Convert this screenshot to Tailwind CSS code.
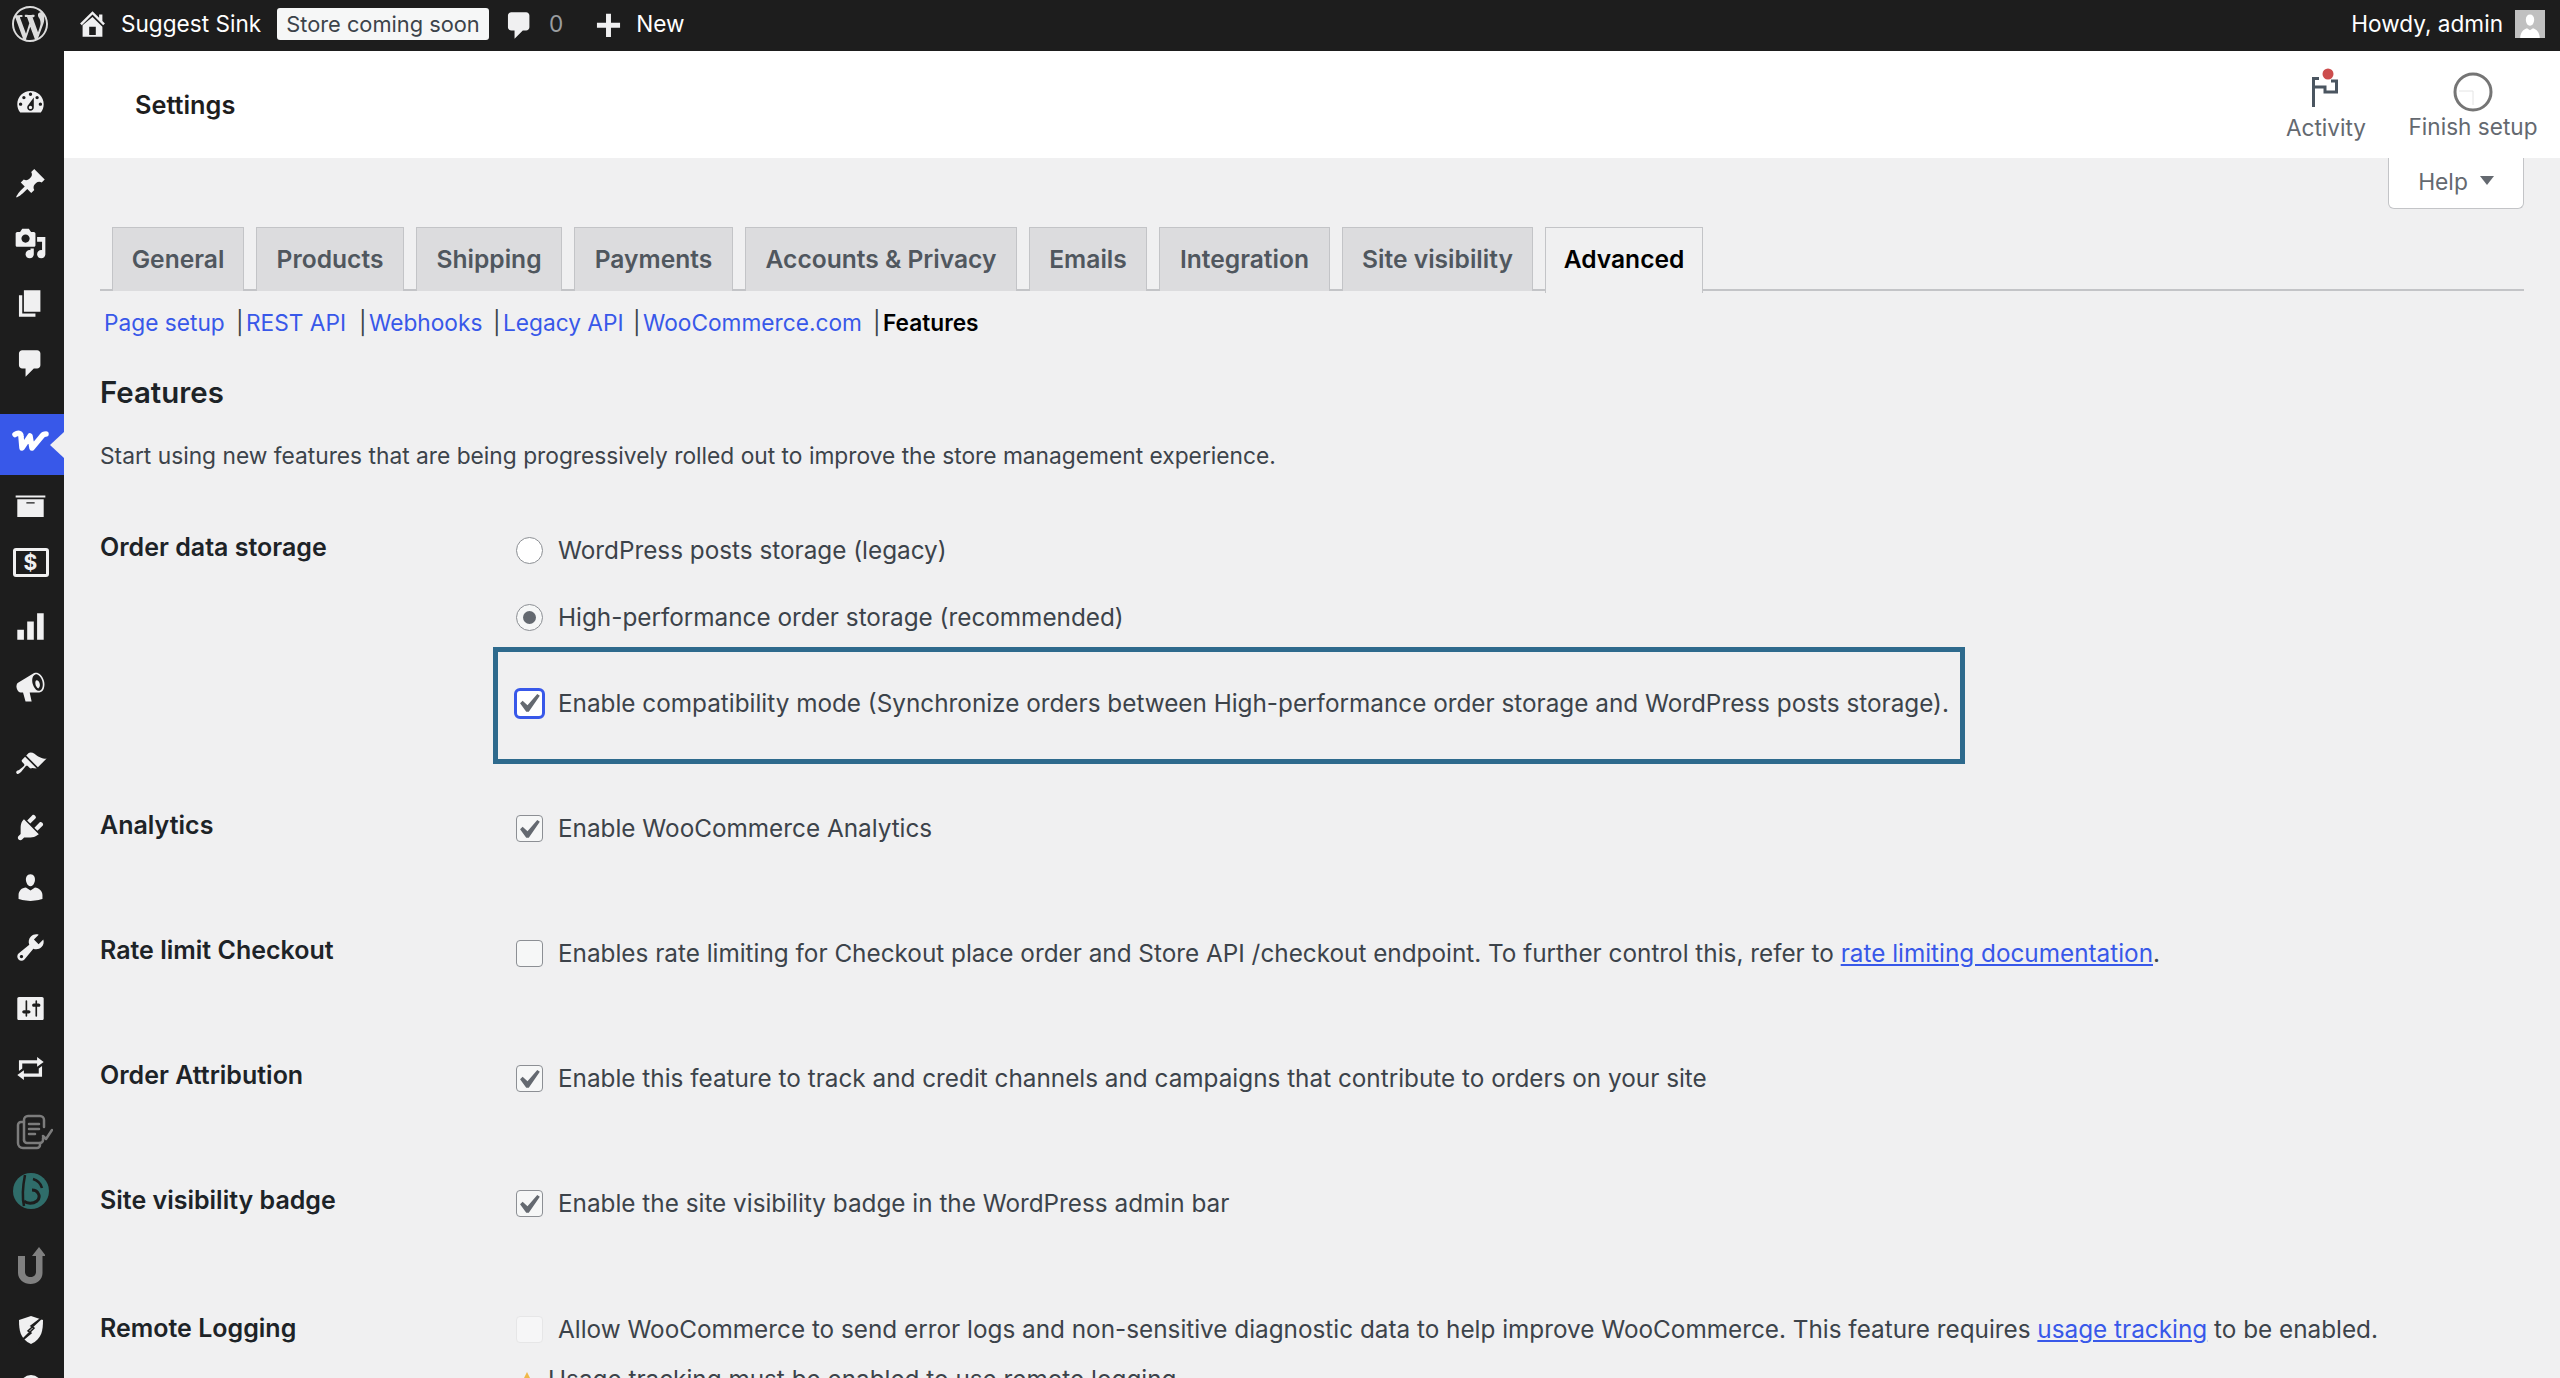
<!DOCTYPE html>
<html lang="en">
<head>
<meta charset="utf-8">
<title>Settings</title>
<script src="https://cdn.jsdelivr.net/npm/@tailwindcss/browser@4"></script>
</head>
<body class="m-0 bg-[#f0f0f1]">
<div class="w-[2560px] h-[1378px] overflow-hidden flex flex-col font-['Inter',sans-serif] text-[#3c434a]">
  <!-- admin bar -->
  <header class="h-[51px] shrink-0 bg-[#1d1d1d] flex items-center text-white text-[22.6px] pb-[3px]">
    <svg class="ml-[12px] w-[36px] h-[36px]" viewBox="0 0 20 20" fill="#dcdcdc"><path d="M20 10c0-5.51-4.49-10-10-10C4.48 0 0 4.49 0 10c0 5.52 4.48 10 10 10 5.51 0 10-4.48 10-10zM7.78 15.37L4.37 6.22c.55-.02 1.17-.08 1.17-.08.5-.06.44-1.13-.06-1.11 0 0-1.45.11-2.37.11-.18 0-.37 0-.58-.01C4.12 2.69 6.87 1.11 10 1.11c2.33 0 4.45.87 6.05 2.34-.68-.11-1.65.39-1.65 1.58 0 .74.45 1.36.9 2.1.35.61.55 1.36.55 2.46 0 1.49-1.4 5-1.4 5l-3.03-8.37c.54-.02.82-.17.82-.17.5-.05.44-1.25-.06-1.22 0 0-1.44.12-2.38.12-.87 0-2.33-.12-2.33-.12-.5-.03-.56 1.2-.06 1.22l.92.08 1.26 3.41zM17.41 10c.24-.64.74-1.87.43-4.25.7 1.29 1.05 2.71 1.05 4.25 0 3.29-1.73 6.24-4.4 7.78.97-2.59 1.94-5.2 2.92-7.78zM6.1 18.09C3.12 16.65 1.11 13.53 1.11 10c0-1.3.23-2.48.72-3.59C3.25 10.3 4.67 14.2 6.1 18.09zm4.03-6.63l2.58 6.98c-.86.29-1.76.45-2.71.45-.79 0-1.57-.11-2.29-.33.81-2.38 1.62-4.74 2.42-7.1z"/></svg>
    <svg class="ml-[28px] w-[33px] h-[33px] -mt-[2px]" viewBox="0 0 20 20" fill="#f0f0f1"><path d="M16 8.5l1.53 1.53-1.06 1.06L10 4.62l-6.47 6.47-1.06-1.06L10 2.5l4 4v-2h2v4zm-6-2.46l6 5.99V18H4v-6.97zM12 17v-5H8v5h4z"/></svg>
    <span class="ml-[12px] w-[145px] whitespace-nowrap">Suggest Sink</span>
    <span class="ml-[11px] w-[212px] h-[32px] bg-[#f6f7f7] rounded-[3px] text-[#3c434a] text-[21.8px] flex items-center justify-center whitespace-nowrap">Store coming soon</span>
    <svg class="ml-[14px] w-[33px] h-[33px] mt-[2px]" viewBox="0 0 20 20" fill="#f0f0f1"><path d="M5 2h9c1.1 0 2 .9 2 2v7c0 1.1-.9 2-2 2h-2l-5 5v-5H5c-1.1 0-2-.9-2-2V4c0-1.1.9-2 2-2z"/></svg>
    <span class="ml-[13px] text-[#9a9da0]">0</span>
    <svg class="ml-[29px] w-[33px] h-[33px]" viewBox="0 0 20 20" fill="#f0f0f1"><path d="M17 9v3h-5.5v5.5h-3V12H3V9h5.5V3.5h3V9H17z"/></svg>
    <span class="ml-[11px]">New</span>
    <span class="ml-auto whitespace-nowrap">Howdy, admin</span>
    <span class="ml-[12px] mr-[15px] w-[30px] h-[28px] bg-[#c0c0c0] overflow-hidden flex items-end justify-center">
      <svg class="w-[26px] h-[26px]" viewBox="0 0 20 20" fill="#fff"><path d="M10 10.5c-2.4 0-3.2-3-3.2-4.8C6.8 3.6 8 2 10 2s3.2 1.6 3.2 3.7c0 1.8-.8 4.8-3.2 4.8zM2.5 20c0-4 2.500-6.800 5.200-7.500L10 14l2.300-1.500c2.700.7 5.200 3.500 5.200 7.500z"/></svg>
    </span>
  </header>

  <div class="flex flex-1 min-h-0">
    <!-- sidebar -->
    <nav class="w-[64px] shrink-0 bg-[#1d1d1d] pt-[21px] pr-[3px] overflow-hidden">
      <div class="h-[60px] flex items-center justify-center"><svg class="w-[33px] h-[33px]" viewBox="0 0 20 20" fill="#f0f0f1"><path d="M3.760 16h12.480c1.100-1.370 1.760-3.110 1.760-5 0-4.420-3.580-8-8-8s-8 3.580-8 8c0 1.890.66 3.630 1.760 5zM10 4c.55 0 1 .45 1 1s-.45 1-1 1-1-.45-1-1 .45-1 1-1zM6 6c.55 0 1 .45 1 1s-.45 1-1 1-1-.45-1-1 .45-1 1-1zm8 0c.55 0 1 .45 1 1s-.45 1-1 1-1-.45-1-1 .45-1 1-1zm-5.370 5.550L12 7v6c0 1.100-.9 2-2 2s-2-.9-2-2c0-.57.24-1.080.63-1.450zM4 10c.55 0 1 .45 1 1s-.45 1-1 1-1-.45-1-1 .45-1 1-1zm12 0c.55 0 1 .45 1 1s-.45 1-1 1-1-.45-1-1 .45-1 1-1zm-5 3c0-.55-.45-1-1-1s-1 .45-1 1 .45 1 1 1 1-.45 1-1z"/></svg></div>
      <div class="mt-[21px] h-[60px] flex items-center justify-center"><svg class="w-[33px] h-[33px]" viewBox="0 0 20 20" fill="#f0f0f1"><path d="M10.440 3.020l1.820-1.820 6.360 6.350-1.830 1.820c-1.050-.68-2.480-.57-3.410.36l-.75.75c-.92.93-1.040 2.350-.35 3.410l-1.830 1.820-2.410-2.410-2.800 2.790c-.42.42-3.380 2.710-3.800 2.290s1.860-3.390 2.280-3.810l2.790-2.790L4.100 9.360l1.830-1.820c1.050.69 2.480.57 3.400-.36l.75-.75c.93-.92 1.050-2.350.36-3.410z"/></svg></div>
      <div class="h-[60px] flex items-center justify-center"><svg class="w-[33px] h-[33px]" viewBox="0 0 20 20" fill="#f0f0f1"><path d="M13 11V4c0-.55-.45-1-1-1h-1.670L9 1H5L3.670 3H2c-.55 0-1 .45-1 1v7c0 .55.45 1 1 1h10c.55 0 1-.45 1-1zM7 4.500c1.380 0 2.500 1.120 2.500 2.500S8.380 9.500 7 9.500 4.500 8.380 4.500 7 5.620 4.500 7 4.500zM14 6h5v10.500c0 1.380-1.120 2.500-2.500 2.500S14 17.880 14 16.500s1.120-2.500 2.500-2.500c.17 0 .34.02.5.05V9h-3V6zm-4 8.050V13h2v3.500c0 1.380-1.120 2.500-2.500 2.500S7 17.880 7 16.500 8.120 14 9.500 14c.17 0 .34.02.5.05z"/></svg></div>
      <div class="h-[60px] flex items-center justify-center"><svg class="w-[33px] h-[33px]" viewBox="0 0 20 20" fill="#f0f0f1"><path d="M6 15V2h10v13H6zm-1 1h8v2H3V5h2v11z"/></svg></div>
      <div class="h-[60px] flex items-center justify-center"><svg class="w-[33px] h-[33px]" viewBox="0 0 20 20" fill="#f0f0f1"><path d="M5 2h9c1.100 0 2 .9 2 2v7c0 1.100-.9 2-2 2h-2l-5 5v-5H5c-1.100 0-2-.9-2-2V4c0-1.100.9-2 2-2z"/></svg></div>
      <!-- active -->
      <div class="mt-[21px] -mr-[3px] h-[61px] bg-[#3858e9] relative flex items-center justify-center">
        <svg class="w-[37px] h-[22px] -ml-[3px] -mt-[7px]" viewBox="0 0 37 22" fill="none" stroke="#fff" stroke-width="5.500" stroke-linejoin="round" stroke-linecap="round"><path d="M3 4.500C6 2.500 9 3 9 6.500L10 18l8-12 2 12L30 6c1-1.500 2.500-2 4-2"/></svg>
        <span class="absolute right-0 top-1/2 -translate-y-1/2 w-0 h-0 border-y-[13px] border-y-transparent border-r-[14px] border-r-[#f0f0f1]"></span>
      </div>
      <div class="h-[60px] flex items-center justify-center"><svg class="w-[33px] h-[33px]" viewBox="0 0 20 20" fill="#f0f0f1"><path d="M19 4v1.200H1V4h18zM2 6.200h16V17H2V6.200zm10.500 2.600V8h-5v.8h5z"/></svg></div>
      <div class="h-[54px] flex items-center justify-center">
        <span class="w-[36px] h-[29px] rounded-[3px] border-[3px] border-[#f0f0f1] flex items-center justify-center text-[#f0f0f1] text-[21px] font-bold leading-none">$</span>
      </div>
      <div class="h-[74px] flex items-center justify-center"><svg class="w-[33px] h-[33px]" viewBox="0 0 20 20" fill="#f0f0f1"><path d="M18 18V2h-4v16h4zm-6 0V7H8v11h4zm-6 0v-6H2v6h4z"/></svg></div>
      <div class="h-[48px] flex items-center justify-center"><svg class="w-[33px] h-[33px]" viewBox="0 0 20 20" fill="#f0f0f1"><path d="M18.150 5.940c.46 1.620.38 3.220-.02 4.480-.42 1.280-1.260 2.180-2.300 2.480-.16.06-.26.06-.4.06-.06.02-.12.02-.18.02-.06.02-.14.02-.22.02H9.500l1.200 5.500H7l-1.530-5.500H4.250l-.02-.02c-.5.06-1.080-.18-1.540-.62s-.88-1.080-1.060-1.880c-.24-.8-.2-1.560-.02-2.200.18-.62.58-1.080 1.060-1.300l.02-.02 9-5.400c.1-.06.18-.1.24-.16.06-.04.14-.08.24-.12.16-.08.28-.12.5-.18 1.040-.3 2.240.1 3.220.98s1.840 2.240 2.260 3.860zm-2.580 5.980h-.02c.4-.1.74-.34 1.040-.7.58-.7.86-1.760.86-3.040 0-.64-.1-1.300-.26-1.980-.34-1.360-1.020-2.500-1.780-3.240s-1.680-1.100-2.460-.88c-.82.22-1.400.96-1.700 2-.32 1.040-.28 2.360.06 3.720.38 1.360 1 2.500 1.800 3.240.78.74 1.620 1.100 2.460.88zm-.38-1.440c-.3.1-.62.02-.96-.22s-.62-.6-.86-1.120c-.12-.26-.22-.54-.3-.86-.16-.62-.18-1.240-.1-1.720.12-.5.36-.82.7-.92.34-.08.72.06 1.080.4.36.36.64.88.8 1.520.18.64.18 1.260.06 1.740-.12.5-.38.86-.72.96z"/></svg></div>
      <div class="mt-[24px] h-[60px] flex items-center justify-center"><svg class="w-[33px] h-[33px]" viewBox="0 0 20 20" fill="#f0f0f1"><path d="M14.480 11.060L7.410 3.990l1.500-1.500c.5-.56 2.300-.47 3.510.32 1.210.8 1.430 1.280 2.910 2.100 1.180.64 2.450 1.260 4.450.85zm-.71.71L6.700 4.700 4.930 6.470c-.39.39-.39 1.020 0 1.410l1.060 1.060c.39.39.39 1.030 0 1.420-.6.6-1.430 1.110-2.210 1.690-.35.26-.7.53-1.010.84C1.430 13.230.91 14.100 1.620 14.810s1.580.19 2.920-1.150c.31-.31.58-.66.84-1.010.58-.78 1.090-1.610 1.690-2.210.39-.39 1.030-.39 1.420 0l1.060 1.060c.39.39 1.020.39 1.410 0z"/></svg></div>
      <div class="h-[64px] flex items-center justify-center"><svg class="w-[33px] h-[33px]" viewBox="0 0 20 20" fill="#f0f0f1"><path d="M13.110 4.360L9.870 7.600 8 5.730l3.240-3.240c.35-.34 1.050-.2 1.560.32.52.51.66 1.210.31 1.550zm-8 1.770l.91-1.120 9.010 9.010-1.190.84c-.71.71-2.630 1.160-3.820 1.160H6.140L4.900 17.260c-.59.59-1.540.59-2.120 0-.59-.58-.59-1.530 0-2.120l1.240-1.240v-3.880c0-1.130.4-3.190 1.090-3.890zm7.260 3.970l3.240-3.240c.34-.35 1.040-.21 1.550.31.52.51.66 1.210.31 1.550l-3.240 3.250z"/></svg></div>
      <div class="h-[56px] flex items-center justify-center"><svg class="w-[33px] h-[33px]" viewBox="0 0 20 20" fill="#f0f0f1"><path d="M10 9.250c-2.270 0-2.730-3.440-2.730-3.440C7 4.020 7.820 2 9.970 2c2.160 0 2.980 2.020 2.710 3.810 0 0-.41 3.440-2.680 3.440zm0 2.570L12.720 10c2.390 0 4.520 2.330 4.520 4.530v2.490s-3.650 1.130-7.240 1.130c-3.650 0-7.240-1.130-7.240-1.130v-2.490c0-2.250 1.940-4.480 4.470-4.480z"/></svg></div>
      <div class="h-[64px] flex items-center justify-center"><svg class="w-[33px] h-[33px]" viewBox="0 0 20 20" fill="#f0f0f1"><path d="M16.680 9.770c-1.340 1.340-3.300 1.670-4.950.99l-5.410 6.520c-.99.99-2.590.99-3.580 0s-.99-2.590 0-3.570l6.520-5.420c-.68-1.650-.35-3.610.99-4.950 1.280-1.280 3.120-1.620 4.720-1.060l-2.890 2.890 2.820 2.820 2.860-2.870c.53 1.580.18 3.390-1.080 4.650zM3.810 16.210c.4.39 1.040.39 1.430 0 .4-.4.4-1.040 0-1.430-.39-.4-1.030-.4-1.430 0-.39.39-.39 1.030 0 1.430z"/></svg></div>
      <div class="h-[58px] flex items-center justify-center"><svg class="w-[33px] h-[33px]" viewBox="0 0 20 20" fill="#f0f0f1"><path d="M18 16V4c0-.55-.45-1-1-1H3c-.55 0-1 .45-1 1v12c0 .55.45 1 1 1h14c.55 0 1-.45 1-1zM8 11h1c.55 0 1 .45 1 1s-.45 1-1 1H8v1.500c0 .28-.22.5-.5.5s-.5-.22-.5-.5V13H6c-.55 0-1-.45-1-1s.45-1 1-1h1V5.500c0-.28.22-.5.5-.5s.5.22.5.5V11zm5-2h-1c-.55 0-1-.45-1-1s.45-1 1-1h1V5.500c0-.28.22-.5.5-.5s.5.22.5.5V7h1c.55 0 1 .45 1 1s-.45 1-1 1h-1v5.500c0 .28-.22.5-.5.5s-.5-.22-.5-.5V9z"/></svg></div>
      <div class="h-[62px] flex items-center justify-center"><svg class="w-[33px] h-[33px]" viewBox="0 0 20 20" fill="#f0f0f1"><path d="M5 7v3l-2 1.500V5h11V3l4 3.010L14 9V7H5zm10 6v-3l2-1.500V15H6v2l-4-3.010L6 11v2h9z"/></svg></div>
      <div class="h-[66px] flex items-center justify-center"><svg class="w-[38px] h-[36px] ml-[7px]" viewBox="0 0 38 36" fill="none" stroke="#7c7c7c" stroke-width="2.500" stroke-linejoin="round" stroke-linecap="round"><path d="M9 8h-3a3 3 0 0 0-3 3v18a5 5 0 0 0 5 5h14a3 3 0 0 0 3-3v-2"/><path d="M9 26V6a4 4 0 0 1 4-4h12a4 4 0 0 1 4 4v7"/><path d="M9 26a3 3 0 0 0 3 3h13a3 3 0 0 0 3-3v-2"/><path d="M14 10h10M14 15h10M14 20h6"/><path d="M28 22l3 3 6-9"/></svg></div>
      <div class="h-[52px] flex items-center justify-center"><svg class="w-[36px] h-[36px]" viewBox="0 0 36 36"><circle cx="18" cy="18" r="18" fill="#2f6d6a"/><path d="M12 2C10 12 9 24 11 33" fill="none" stroke="#1d1d1d" stroke-width="2.500"/><path d="M11 28c3 3 9 3 13 0 2-2 3-5 1-8-1-2-3-3-6-3" fill="none" stroke="#1d1d1d" stroke-width="3"/><path d="M20 6a13 13 0 0 1 9 9" fill="none" stroke="#1d1d1d" stroke-width="2.500"/></svg></div>
      <div class="h-[96px] flex items-center justify-center"><svg class="w-[28px] h-[38px]" viewBox="0 0 28 38" fill="#808080"><path d="M1 10h7v16c0 3 2.500 5 5.500 5s5.500-2 5.500-5V10h-4l7-9 7 9h-3.500v17c0 6.500-5.500 11-12 11S1 33.500 1 27z"/></svg></div>
      <div class="h-[34px] flex items-center justify-center"><svg class="w-[30px] h-[30px]" viewBox="0 0 30 30"><path d="M15 1l12 4c0 10-1 19-12 24C4 24 3 15 3 5z" fill="#f0f0f1"/><path d="M28 1L15 11l3 2L2 29l13-11-3-2z" fill="#f0f0f1" stroke="#1d1d1d" stroke-width="1.500"/></svg></div>
      <div class="mt-[28px] h-[30px] flex justify-center"><span class="w-[22px] h-[22px] rounded-full bg-[#f0f0f1]"></span></div>
    </nav>

    <!-- main -->
    <main class="flex-1 min-w-0 flex flex-col">
      <div class="h-[107px] shrink-0 bg-white flex items-center">
        <h1 class="ml-[71px] text-[25.3px] font-semibold text-[#1e1e1e] mt-[1px]">Settings</h1>
        <div class="ml-auto flex h-full text-[22.6px] text-[#646970]">
          <div class="w-[120px] flex flex-col items-center pt-[15px] mr-[22px]">
            <svg class="w-[34px] h-[45px] shrink-0" viewBox="0 0 34 45" fill="none"><path d="M4.500 41V12.500H10M4.500 21H16v5h11.500V15H22" stroke="#4a5560" stroke-width="3"/><circle cx="19" cy="8" r="5.500" fill="#cc4d4d"/></svg>
            <span>Activity</span>
          </div>
          <div class="w-[130px] mr-[22px] flex flex-col items-center pt-[21px] whitespace-nowrap">
            <svg class="w-[40px] h-[40px] shrink-0" viewBox="0 0 40 40" fill="none"><circle cx="20" cy="20" r="18" stroke="#757575" stroke-width="3"/><path d="M6 19h14v14" stroke="#e4e4e4" stroke-width="1"/></svg>
            <span class="-mt-[2px]">Finish setup</span>
          </div>
        </div>
      </div>

      <div class="px-[36px] flex-1 min-h-0">
        <div class="h-[69px] flex justify-end">
          <div class="w-[136px] h-[51px] pb-[2px] bg-white border border-t-0 border-[#c3c4c7] rounded-b-[6px] flex items-center justify-center gap-[12px] text-[22.8px] text-[#646970]">
            <span>Help</span>
            <span class="w-0 h-0 border-x-[7px] border-x-transparent border-t-[9px] border-t-[#646970] -mt-[3px]"></span>
          </div>
        </div>

        <div class="h-[64px] border-b-2 border-[#c3c4c7] pl-[12px] flex gap-[12px] text-[24.6px] font-semibold text-[#50575e]">
          <a class="w-[132px] h-[64px] bg-[#dcdcde] border border-b-0 border-[#c3c4c7] flex items-center justify-center">General</a>
          <a class="w-[148px] h-[64px] bg-[#dcdcde] border border-b-0 border-[#c3c4c7] flex items-center justify-center">Products</a>
          <a class="w-[146px] h-[64px] bg-[#dcdcde] border border-b-0 border-[#c3c4c7] flex items-center justify-center">Shipping</a>
          <a class="w-[159px] h-[64px] bg-[#dcdcde] border border-b-0 border-[#c3c4c7] flex items-center justify-center">Payments</a>
          <a class="w-[272px] h-[64px] bg-[#dcdcde] border border-b-0 border-[#c3c4c7] flex items-center justify-center whitespace-nowrap">Accounts &amp; Privacy</a>
          <a class="w-[118px] h-[64px] bg-[#dcdcde] border border-b-0 border-[#c3c4c7] flex items-center justify-center">Emails</a>
          <a class="w-[171px] h-[64px] bg-[#dcdcde] border border-b-0 border-[#c3c4c7] flex items-center justify-center">Integration</a>
          <a class="w-[191px] h-[64px] bg-[#dcdcde] border border-b-0 border-[#c3c4c7] flex items-center justify-center whitespace-nowrap">Site visibility</a>
          <a class="w-[158px] h-[66px] bg-[#f0f0f1] border border-b-0 border-[#c3c4c7] flex items-center justify-center text-black pb-[2px]">Advanced</a>
        </div>

        <div class="mt-[15px] h-[34px] pl-[4px] flex items-center text-[22.7px] text-[#3858e9] whitespace-nowrap">
          <a class="w-[132px]">Page setup</a><span class="text-[#3c434a] w-[10px]">|</span>
          <a class="w-[113px]">REST API</a><span class="text-[#3c434a] w-[10px]">|</span>
          <a class="w-[124px]">Webhooks</a><span class="text-[#3c434a] w-[10px]">|</span>
          <a class="w-[130px]">Legacy API</a><span class="text-[#3c434a] w-[10px]">|</span>
          <a class="w-[230px]">WooCommerce.com</a><span class="text-[#3c434a] w-[10px]">|</span>
          <span class="font-semibold text-black">Features</span>
        </div>

        <h2 class="mt-[33px] h-[40px] flex items-center text-[29.4px] font-semibold text-[#1d2327]">Features</h2>
        <p class="mt-[28px] h-[30px] flex items-center text-[22.76px]">Start using new features that are being progressively rolled out to improve the store management experience.</p>

        <!-- settings rows -->
        <div class="mt-[45px] grid grid-cols-[416px_1fr] text-[24.3px] whitespace-nowrap">
          <div class="font-semibold text-[#1d2327] text-[25px] h-[64px] flex items-center">Order data storage</div>
          <div>
            <div class="h-[68px] flex items-center gap-[15px]">
              <span class="w-[27px] h-[27px] rounded-full bg-white border border-[#8c8f94]"></span>
              <span>WordPress posts storage (legacy)</span>
            </div>
            <div class="h-[66px] flex items-center gap-[15px]">
              <span class="w-[27px] h-[27px] rounded-full bg-[#f6f7f7] border border-[#8c8f94] flex items-center justify-center"><span class="w-[13px] h-[13px] rounded-full bg-[#646970]"></span></span>
              <span>High-performance order storage (recommended)</span>
            </div>
            <div class="-mt-[3px] -ml-[23px] w-[1472px] h-[117px] border-[5px] border-[#2e6a8d] pl-[18px] pb-[5px] flex items-center gap-[15px]">
              <span class="w-[31px] h-[31px] -mx-[2px] rounded-[6px] bg-white border-[3px] border-[#3858e9] flex items-center justify-center"><svg class="w-[38px] h-[38px] shrink-0" viewBox="1 -0.4 20 20" fill="#646970"><path d="M14.830 4.890l1.340.94-5.810 8.380H9.020L5.780 9.670l1.340-1.250 2.570 2.400z"/></svg></span>
              <span>Enable compatibility mode (Synchronize orders between High-performance order storage and WordPress posts storage).</span>
            </div>
            <div class="h-[2px]"></div>
          </div>

          <div class="font-semibold text-[#1d2327] text-[25px] h-[125px] flex items-center pb-[5px]">Analytics</div>
          <div class="h-[125px] flex items-center gap-[15px]">
            <span class="w-[27px] h-[27px] rounded-[4px] bg-[#f6f7f7] border border-[#8c8f94] flex items-center justify-center"><svg class="w-[38px] h-[38px] shrink-0" viewBox="1 -0.4 20 20" fill="#646970"><path d="M14.830 4.890l1.340.94-5.810 8.380H9.020L5.780 9.670l1.340-1.250 2.570 2.400z"/></svg></span>
            <span>Enable WooCommerce Analytics</span>
          </div>

          <div class="font-semibold text-[#1d2327] text-[25px] h-[125px] flex items-center pb-[5px]">Rate limit Checkout</div>
          <div class="h-[125px] flex items-center gap-[15px]">
            <span class="w-[27px] h-[27px] rounded-[4px] bg-[#f6f7f7] border border-[#8c8f94]"></span>
            <span>Enables rate limiting for Checkout place order and Store API /checkout endpoint. To further control this, refer to <a class="text-[#3858e9] underline">rate limiting documentation</a>.</span>
          </div>

          <div class="font-semibold text-[#1d2327] text-[25px] h-[125px] flex items-center pb-[5px]">Order Attribution</div>
          <div class="h-[125px] flex items-center gap-[15px]">
            <span class="w-[27px] h-[27px] rounded-[4px] bg-[#f6f7f7] border border-[#8c8f94] flex items-center justify-center"><svg class="w-[38px] h-[38px] shrink-0" viewBox="1 -0.4 20 20" fill="#646970"><path d="M14.830 4.890l1.340.94-5.810 8.380H9.020L5.780 9.670l1.340-1.250 2.570 2.400z"/></svg></span>
            <span>Enable this feature to track and credit channels and campaigns that contribute to orders on your site</span>
          </div>

          <div class="font-semibold text-[#1d2327] text-[25px] h-[125px] flex items-center pb-[5px]">Site visibility badge</div>
          <div class="h-[125px] flex items-center gap-[15px]">
            <span class="w-[27px] h-[27px] rounded-[4px] bg-[#f6f7f7] border border-[#8c8f94] flex items-center justify-center"><svg class="w-[38px] h-[38px] shrink-0" viewBox="1 -0.4 20 20" fill="#646970"><path d="M14.830 4.890l1.340.94-5.810 8.380H9.020L5.780 9.670l1.340-1.250 2.570 2.400z"/></svg></span>
            <span>Enable the site visibility badge in the WordPress admin bar</span>
          </div>

          <div class="font-semibold text-[#1d2327] text-[25px] pt-[44px] h-[40px]">Remote Logging</div>
          <div class="pt-[43px]">
            <div class="h-[40px] flex items-center gap-[15px]">
              <span class="w-[27px] h-[27px] rounded-[4px] bg-[#f6f6f7] border border-[#e6e6e7]"></span>
              <span>Allow WooCommerce to send error logs and non-sensitive diagnostic data to help improve WooCommerce. This feature requires <a class="text-[#3858e9] underline">usage tracking</a> to be enabled.</span>
            </div>
            <div class="mt-[12px] flex items-center gap-[14px]">
              <span class="w-0 h-0 border-x-[7px] border-x-transparent border-b-[14px] border-b-[#f0b849] ml-[4px]"></span>
              <span>Usage tracking must be enabled to use remote logging.</span>
            </div>
          </div>
        </div>
      </div>
    </main>
  </div>
</div>
</body>
</html>
